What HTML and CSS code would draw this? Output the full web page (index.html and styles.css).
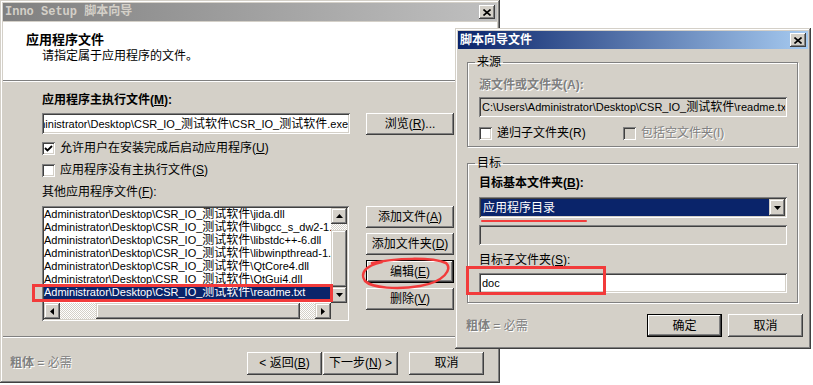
FILE: index.html
```html
<!DOCTYPE html>
<html lang="zh-CN">
<head>
    <meta charset="UTF-8">
    <meta name="viewport" content="width=device-width, initial-scale=1.0">
    <title>Inno Setup 脚本向导</title>
    <link rel="stylesheet" href="styles.css">
</head>
<body>
<div class="desk">

    <!-- 主向导窗口（非活动） -->
    <div class="win main">
        <div class="titlebar inactive">
            <span class="title mono">Inno Setup 脚本向导</span>
            <span class="close-btn"><svg width="8" height="7" viewBox="0 0 8 7"><path d="M0.5 0.5L7.5 6.5M7.5 0.5L0.5 6.5" stroke="#000" stroke-width="1.6"/></svg></span>
        </div>
        <div class="header">
            <div class="header-title">应用程序文件</div>
            <div class="header-sub">请指定属于应用程序的文件。</div>
        </div>
        <div class="sep"></div>

        <div class="content">
            <div class="label bold">应用程序主执行文件(<u>M</u>):</div>
            <div class="exe-row">
                <div class="field exe-field">
                    <div class="field-text path to-end"><span>C:\Users\Administrator\Desktop\CSR_IO_<span class="zh">测试软件</span>\CSR_IO_<span class="zh">测试软件</span>.exe</span></div>
                </div>
                <button class="btn browse-btn">浏览(<u>R</u>)...</button>
            </div>
            <div class="check-row first">
                <span class="checkbox"><svg width="9" height="9" viewBox="0 0 9 9"><path d="M1 4L3.5 6.5L8 2" fill="none" stroke="#000" stroke-width="1.8"/></svg></span>
                <span>允许用户在安装完成后启动应用程序(<u>U</u>)</span>
            </div>
            <div class="check-row second">
                <span class="checkbox"></span>
                <span>应用程序没有主执行文件(<u>S</u>)</span>
            </div>
            <div class="label other-label">其他应用程序文件(<u>F</u>):</div>

            <div class="files-row">
                <div class="listbox">
                    <div class="list-grid">
                        <div class="list-items path">
                            <div class="item">Administrator\Desktop\CSR_IO_<span class="zh">测试软件</span>\jida.dll</div>
                            <div class="item">Administrator\Desktop\CSR_IO_<span class="zh">测试软件</span>\libgcc_s_dw2-1.dll</div>
                            <div class="item">Administrator\Desktop\CSR_IO_<span class="zh">测试软件</span>\libstdc++-6.dll</div>
                            <div class="item">Administrator\Desktop\CSR_IO_<span class="zh">测试软件</span>\libwinpthread-1.dll</div>
                            <div class="item">Administrator\Desktop\CSR_IO_<span class="zh">测试软件</span>\QtCore4.dll</div>
                            <div class="item">Administrator\Desktop\CSR_IO_<span class="zh">测试软件</span>\QtGui4.dll</div>
                            <div class="item selected">Administrator\Desktop\CSR_IO_<span class="zh">测试软件</span>\readme.txt</div>
                        </div>
                        <div class="vscroll">
                            <div class="sb-btn"><svg width="7" height="4" viewBox="0 0 7 4"><path d="M3.5 0L7 4H0z"/></svg></div>
                            <div class="sb-track v-track"></div>
                            <div class="sb-thumb"></div>
                            <div class="sb-btn"><svg width="7" height="4" viewBox="0 0 7 4"><path d="M0 0H7L3.5 4z"/></svg></div>
                        </div>
                        <div class="hscroll">
                            <div class="sb-btn"><svg width="4" height="7" viewBox="0 0 4 7"><path d="M4 0V7L0 3.5z"/></svg></div>
                            <div class="sb-track h-track-a"></div>
                            <div class="sb-thumb"></div>
                            <div class="sb-track h-track-b"></div>
                            <div class="sb-btn"><svg width="4" height="7" viewBox="0 0 4 7"><path d="M0 0V7L4 3.5z"/></svg></div>
                        </div>
                        <div class="sb-corner"></div>
                    </div>
                </div>
                <div class="side-btns">
                    <button class="btn">添加文件(<u>A</u>)</button>
                    <button class="btn">添加文件夹(<u>D</u>)</button>
                    <button class="btn default">编辑(<u>E</u>)</button>
                    <button class="btn">删除(<u>V</u>)</button>
                </div>
            </div>
        </div>

        <div class="sep"></div>
        <div class="footer">
            <span class="required"><b>粗体</b> = 必需</span>
            <div class="nav-btns">
                <button class="btn">&lt; 返回(<u>B</u>)</button>
                <button class="btn">下一步(<u>N</u>) &gt;</button>
            </div>
            <button class="btn cancel-btn">取消</button>
        </div>
    </div>

    <!-- 脚本向导文件 对话框 -->
    <div class="win dialog">
        <div class="titlebar active">
            <span class="title bold">脚本向导文件</span>
            <span class="close-btn"><svg width="8" height="7" viewBox="0 0 8 7"><path d="M0.5 0.5L7.5 6.5M7.5 0.5L0.5 6.5" stroke="#000" stroke-width="1.6"/></svg></span>
        </div>
        <div class="dlg-body">
            <fieldset class="group">
                <legend>来源</legend>
                <div class="label bold disabled">源文件或文件夹(A):</div>
                <div class="field dlg-field gray">
                    <div class="field-text path">C:\Users\Administrator\Desktop\CSR_IO_<span class="zh">测试软件</span>\readme.txt</div>
                </div>
                <div class="src-checks">
                    <div class="check-row">
                        <span class="checkbox"></span>
                        <span>递归子文件夹(R)</span>
                    </div>
                    <div class="check-row disabled">
                        <span class="checkbox gray"></span>
                        <span>包括空文件夹(I)</span>
                    </div>
                </div>
            </fieldset>

            <fieldset class="group target">
                <legend>目标</legend>
                <div class="label bold">目标基本文件夹(<u>B</u>):</div>
                <div class="field combo">
                    <div class="combo-value">应用程序目录</div>
                    <div class="combo-btn"><svg width="7" height="4" viewBox="0 0 7 4"><path d="M0 0H7L3.5 4z"/></svg></div>
                </div>
                <div class="red-line"></div>
                <div class="field dlg-field gray empty"></div>
                <div class="label sub-label">目标子文件夹(<u>S</u>):</div>
                <div class="field dlg-field">
                    <div class="field-text path">doc</div>
                </div>
            </fieldset>
        </div>
        <div class="dlg-footer">
            <span class="required"><b>粗体</b> = 必需</span>
            <button class="btn default">确定</button>
            <button class="btn">取消</button>
        </div>
    </div>

    <!-- 红色标注 -->
    <div class="mark mark-row"></div>
    <div class="mark mark-doc"></div>
    <svg class="mark-oval" width="813" height="385" viewBox="0 0 813 385">
        <path d="M372 263 C395 258 432 257 446 263 C453 269 444 282 420 286 C398 290 372 288 365 281 C360 274 364 266 382 262" fill="none" stroke="#f23b3b" stroke-width="2.5" stroke-linecap="round"/>
    </svg>
</div>
</body>
</html>
```

FILE: styles.css
```css
* {
    box-sizing: border-box;
}
body {
    margin: 0;
    width: 813px;
    height: 385px;
    overflow: hidden;
    background: #fff;
    font-family: "Liberation Sans", "Noto Sans CJK SC", sans-serif;
    font-size: 12px;
    line-height: 14px;
    color: #000;
}
.desk {
    position: relative;
    width: 813px;
    height: 385px;
}
.bold { font-weight: bold; }
.mono { font-family: "Liberation Mono", "Noto Sans CJK SC", monospace; }
.path { font-size: 11px; }
.path .zh { font-size: 12px; }

/* ---- 窗口 ---- */
.win {
    background: #d4d0c8;
    box-shadow: inset -1px -1px #404040, inset 1px 1px #d4d0c8, inset -2px -2px #808080, inset 2px 2px #fff;
    padding: 3px;
    display: flex;
    flex-direction: column;
}
.main {
    width: 500px;
    height: 383px;
}
.dialog {
    position: absolute;
    left: 455px;
    top: 28px;
    width: 356px;
    height: 321px;
}
.titlebar {
    height: 18px;
    flex: none;
    display: flex;
    align-items: center;
    justify-content: space-between;
    padding: 0 2px 0 2px;
}
.titlebar .title {
    font-weight: bold;
    font-size: 12px;
    white-space: nowrap;
}
.titlebar.inactive {
    background: linear-gradient(to right, #808080, #c0c0c0);
    color: #d4d0c8;
}
.titlebar.active {
    background: linear-gradient(to right, #0a246a, #a6caf0);
    color: #fff;
}
.close-btn {
    width: 16px;
    height: 14px;
    background: #d4d0c8;
    box-shadow: inset -1px -1px #404040, inset 1px 1px #fff, inset -2px -2px #808080;
    display: flex;
    align-items: center;
    justify-content: center;
}

/* ---- 主窗口头部 ---- */
.header {
    background: #fff;
    height: 58px;
    margin-top: 1px;
    padding: 10px 0 0 23px;
    flex: none;
}
.header-title {
    font-weight: bold;
    font-size: 13px;
    line-height: 16px;
}
.header-sub {
    margin: 1px 0 0 16px;
}
.sep {
    flex: none;
    border-top: 1px solid #808080;
    border-bottom: 1px solid #fff;
}

/* ---- 主窗口内容 ---- */
.content {
    flex: 1;
    padding: 11px 0 0 39px;
}
.exe-row {
    display: flex;
    align-items: flex-start;
    margin-top: 6px;
}
.field {
    background: #fff;
    box-shadow: inset 1px 1px #808080, inset -1px -1px #fff, inset 2px 2px #404040, inset -2px -2px #d4d0c8;
    padding: 2px;
}
.field.gray { background: #d4d0c8; }
.field-text {
    overflow: hidden;
    white-space: nowrap;
    height: 100%;
    display: flex;
    align-items: center;
    padding-left: 1px;
}
.field-text.to-end {
    justify-content: flex-end;
    padding-left: 0;
}
.exe-field {
    width: 308px;
    height: 21px;
}
.btn {
    border: none;
    padding: 0;
    margin: 0;
    background: #d4d0c8;
    font: inherit;
    color: #000;
    box-shadow: inset -1px -1px #404040, inset 1px 1px #fff, inset -2px -2px #808080, inset 2px 2px #d4d0c8;
    width: 75px;
    height: 23px;
}
.btn.default {
    box-shadow: inset 0 0 0 1px #000, inset -2px -2px #404040, inset 2px 2px #fff, inset -3px -3px #808080;
}
.browse-btn {
    width: 88px;
    height: 22px;
    margin-left: 16px;
}
.check-row {
    display: flex;
    align-items: center;
    gap: 5px;
    white-space: nowrap;
}
.check-row.first { margin-top: 6px; }
.check-row.second { margin-top: 8px; }
.checkbox {
    width: 13px;
    height: 13px;
    flex: none;
    background: #fff;
    box-shadow: inset 1px 1px #808080, inset -1px -1px #fff, inset 2px 2px #404040, inset -2px -2px #d4d0c8;
    display: flex;
    align-items: center;
    justify-content: center;
}
.checkbox.gray { background: #d4d0c8; }
.other-label { margin-top: 8px; }

/* ---- 文件列表 ---- */
.files-row {
    display: flex;
    align-items: flex-start;
    margin-top: 7px;
}
.listbox {
    width: 307px;
    height: 115px;
    padding: 2px;
    box-shadow: inset 1px 1px #808080, inset -1px -1px #fff, inset 2px 2px #404040, inset -2px -2px #d4d0c8;
    background: #fff;
}
.list-grid {
    height: 100%;
    display: grid;
    grid-template-columns: 1fr 16px;
    grid-template-rows: 1fr 16px;
}
.list-items {
    overflow: hidden;
    white-space: nowrap;
    line-height: 13px;
}
.item { height: 13px; }
.item.selected {
    background: #0a246a;
    color: #fff;
}
.vscroll {
    display: flex;
    flex-direction: column;
}
.hscroll {
    display: flex;
}
.sb-btn {
    width: 16px;
    height: 16px;
    flex: none;
    background: #d4d0c8;
    box-shadow: inset -1px -1px #404040, inset 1px 1px #d4d0c8, inset -2px -2px #808080, inset 2px 2px #fff;
    display: flex;
    align-items: center;
    justify-content: center;
}
.sb-track {
    background: repeating-conic-gradient(#d4d0c8 0% 25%, #fff 0% 50%) 0 0 / 2px 2px;
}
.v-track { height: 6px; }
.h-track-a { width: 36px; }
.h-track-b { width: 15px; }
.sb-thumb {
    flex: 1;
    background: #d4d0c8;
    box-shadow: inset -1px -1px #404040, inset 1px 1px #d4d0c8, inset -2px -2px #808080, inset 2px 2px #fff;
}
.sb-corner { background: #d4d0c8; }
.side-btns {
    display: flex;
    flex-direction: column;
    gap: 5px;
    margin-left: 17px;
}
.side-btns .btn {
    width: 88px;
    height: 22px;
}
.side-btns .btn.default { height: 23px; }

/* ---- 底部 ---- */
.footer {
    height: 42px;
    flex: none;
    display: flex;
    align-items: center;
    padding: 8px 13px 0 7px;
}
.required {
    color: #808080;
    text-shadow: 1px 1px 0 #fff;
    margin-right: auto;
    white-space: nowrap;
}
.nav-btns {
    display: flex;
    gap: 1px;
}
.cancel-btn { margin-left: 11px; }

/* ---- 对话框 ---- */
.dlg-body {
    padding: 6px 10px 0 9px;
}
.group {
    margin: 0;
    padding: 9px 10px 6px 11px;
    border: 1px solid #808080;
    box-shadow: 1px 1px 0 #fff, inset 1px 1px 0 #fff;
    min-width: 0;
}
.group legend {
    padding: 0 2px;
    margin-left: -4px;
    line-height: 14px;
}
.group.target {
    margin-top: 9px;
    padding-top: 6px;
    padding-bottom: 9px;
}
.disabled {
    color: #808080;
    text-shadow: 1px 1px 0 #fff;
}
.dlg-field {
    width: 308px;
    height: 20px;
    margin-top: 5px;
}
.src-checks {
    display: grid;
    grid-template-columns: 144px auto;
    margin-top: 9px;
}
.combo {
    width: 308px;
    height: 21px;
    margin-top: 7px;
    display: flex;
}
.combo-value {
    flex: 1;
    background: #0a246a;
    color: #fff;
    padding-left: 2px;
    display: flex;
    align-items: center;
}
.combo-btn {
    width: 16px;
    flex: none;
    background: #d4d0c8;
    box-shadow: inset -1px -1px #404040, inset 1px 1px #d4d0c8, inset -2px -2px #808080, inset 2px 2px #fff;
    display: flex;
    align-items: center;
    justify-content: center;
}
.red-line {
    width: 106px;
    height: 2px;
    margin: 2px 0 0 2px;
    background: #f23b3b;
    border-radius: 1px;
}
.dlg-field.empty { margin-top: 3px; }
.sub-label { margin-top: 8px; }
.target .dlg-field:last-child { margin-top: 6px; }
.dlg-footer {
    display: flex;
    align-items: center;
    gap: 6px;
    padding: 11px 5px 0 8px;
}

/* ---- 标注 ---- */
.mark {
    position: absolute;
    border: 3px solid #f23b3b;
}
.mark-row {
    left: 32px;
    top: 284px;
    width: 301px;
    height: 18px;
}
.mark-doc {
    left: 466px;
    top: 266px;
    width: 140px;
    height: 29px;
}
.mark-oval {
    position: absolute;
    left: 0;
    top: 0;
    pointer-events: none;
}
```
